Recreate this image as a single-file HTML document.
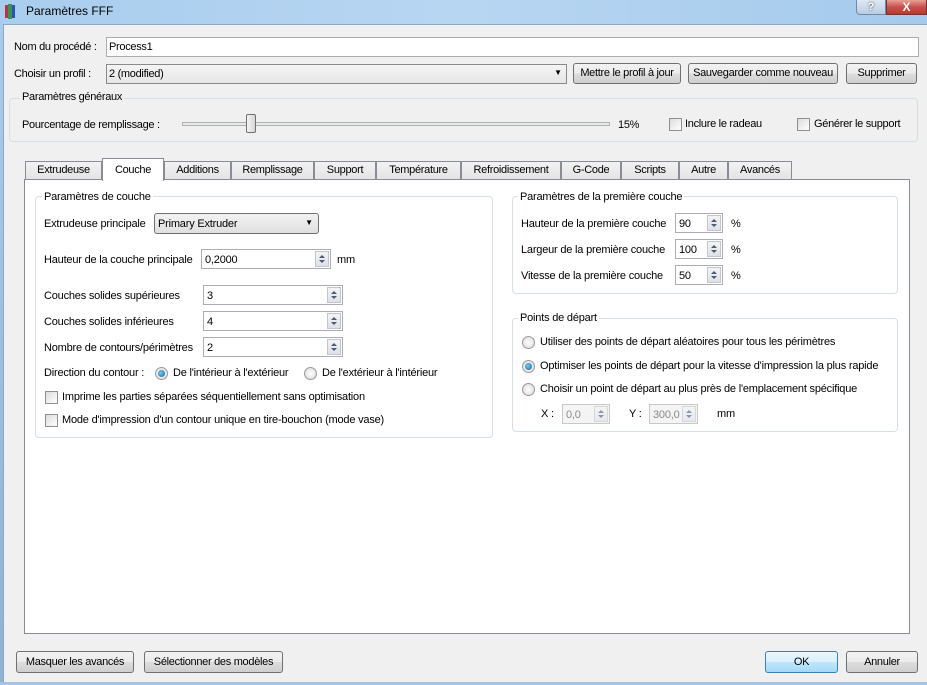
<!DOCTYPE html>
<html><head><meta charset="utf-8"><style>
*{box-sizing:border-box;margin:0;padding:0}
body{width:927px;height:685px;overflow:hidden;background:#f0f0f0;font-family:"Liberation Sans",sans-serif;font-size:11px;color:#000;position:relative}
.a{position:absolute;white-space:nowrap}
.c{font-size:11px;letter-spacing:-0.3px}
.inp{position:absolute;background:#fff;border:1px solid #abadb3}
.btn{position:absolute;border:1px solid #707070;border-radius:3px;background:linear-gradient(#f2f2f2,#ebebeb 50%,#dddddd 51%,#cfcfcf);text-align:center;font-size:11px;letter-spacing:-0.3px}
.grp{position:absolute;border:1px solid #d5dfe5;border-radius:4px}
.gt{position:absolute;background:#f0f0f0;padding:0 2px}
.gtw{position:absolute;background:#fff;padding:0 2px}
.spin{position:absolute;right:1px;top:1px;bottom:1px;width:14px;border:1px solid #c0c6cc;background:linear-gradient(#f4f4f4,#dde1e6)}
.spin:before{content:"";position:absolute;left:3px;top:3px;border:3px solid transparent;border-bottom:3px solid #4a5a78;border-top:0}
.spin:after{content:"";position:absolute;left:3px;bottom:3px;border:3px solid transparent;border-top:3px solid #4a5a78;border-bottom:0}
.cb{position:absolute;width:13px;height:13px;border:1px solid #8f8f8f;background:linear-gradient(135deg,#dcdcdc,#fff)}
.rb{position:absolute;width:13px;height:13px;border-radius:50%;border:1px solid #9a9a9a;background:radial-gradient(#fff,#d8d8d8)}
.rb.on:after{content:"";position:absolute;left:2px;top:2px;width:7px;height:7px;border-radius:50%;background:radial-gradient(circle at 40% 40%,#6ad0f6,#1b5a96)}
.tab{position:absolute;top:161px;height:19px;border:1px solid #898c95;border-bottom:none;background:linear-gradient(#f2f2f2,#e3e3e3);text-align:center;line-height:17px;font-size:11px;letter-spacing:-0.3px}
.t{font-size:11px;letter-spacing:-0.2px}
</style></head><body>
<div class="a" style="left:0;top:0;width:927px;height:25px;background:linear-gradient(90deg,#a9cdee,#b7d6f2 50%,#a5caec)"></div>
<div class="a" style="left:5px;top:5px;width:3px;height:13px;background:#c03040"></div>
<div class="a" style="left:8px;top:4px;width:4px;height:15px;background:#2c9a50"></div>
<div class="a" style="left:12px;top:5px;width:3px;height:13px;background:#3050c0"></div>
<div class="a" style="left:26px;top:4px;font-size:12px">Paramètres FFF</div>
<div class="a" style="left:856px;top:0;width:30px;height:15px;border:1px solid #6d8aa8;border-top:none;border-radius:0 0 0 4px;background:linear-gradient(#dfe9f5,#b8cde3);text-align:center;color:#fff;font-weight:bold;font-size:11px;line-height:14px;text-shadow:0 0 2px #333">?</div>
<div class="a" style="left:886px;top:0;width:41px;height:15px;border:1px solid #7a3030;border-top:none;background:linear-gradient(#e8a193,#c75050 50%,#b83a2a);text-align:center;color:#fff;font-weight:bold;font-size:12px;line-height:14px">X</div>
<div class="a" style="left:0;top:22px;width:4px;height:663px;background:linear-gradient(#aacbea,#8fb1d4)"></div>
<div class="a" style="left:3px;top:24px;width:924px;height:659px;border:1px solid #8da8c4;border-right:none;background:#f0f0f0"></div>
<div class="a" style="left:0;top:682px;width:927px;height:3px;background:#a3c4e4"></div>

<div class="a c" style="left:14px;top:41px">Nom du procédé :</div>
<div class="inp" style="left:106px;top:37px;width:813px;height:20px"><span class="a c" style="left:2px;top:3px">Process1</span></div>
<div class="a c" style="left:14px;top:68px">Choisir un profil :</div>
<div class="inp" style="left:106px;top:64px;width:461px;height:20px;border-color:#8a8a8a;background:linear-gradient(#f4f4f4,#e6e6e6)"><span class="a c" style="left:2px;top:3px">2 (modified)</span><span class="a" style="right:4px;top:3px;font-size:8px">▼</span></div>
<div class="btn" style="left:573px;top:63px;width:108px;height:21px;line-height:19px">Mettre le profil à jour</div>
<div class="btn" style="left:688px;top:63px;width:150px;height:21px;line-height:19px">Sauvegarder comme nouveau</div>
<div class="btn" style="left:846px;top:63px;width:71px;height:21px;line-height:19px">Supprimer</div>

<div class="grp" style="left:9px;top:98px;width:909px;height:44px"></div>
<div class="gt c" style="left:20px;top:91px">Paramètres généraux</div>
<div class="a c" style="left:22px;top:119px">Pourcentage de remplissage :</div>
<div class="a" style="left:182px;top:122px;width:428px;height:4px;border:1px solid #b0b0b0;background:#e7eaea"></div>
<div class="a" style="left:246px;top:114px;width:10px;height:19px;border:1px solid #707070;border-radius:2px;background:linear-gradient(90deg,#f4f4f4,#d6d6d6)"></div>
<div class="a c" style="left:618px;top:119px">15%</div>
<div class="cb" style="left:669px;top:118px"></div><div class="a c" style="left:685px;top:118px">Inclure le radeau</div>
<div class="cb" style="left:797px;top:118px"></div><div class="a c" style="left:814px;top:118px">Générer le support</div>

<div class="tab" style="left:25px;width:77px">Extrudeuse</div>
<div class="tab" style="left:164px;width:67px">Additions</div>
<div class="tab" style="left:231px;width:83px">Remplissage</div>
<div class="tab" style="left:314px;width:62px">Support</div>
<div class="tab" style="left:376px;width:85px">Température</div>
<div class="tab" style="left:461px;width:100px">Refroidissement</div>
<div class="tab" style="left:561px;width:60px">G-Code</div>
<div class="tab" style="left:621px;width:58px">Scripts</div>
<div class="tab" style="left:679px;width:49px">Autre</div>
<div class="tab" style="left:728px;width:64px">Avancés</div>
<div class="a" style="left:24px;top:179px;width:886px;height:455px;background:#fff;border:1px solid #898c95"></div>
<div class="tab" style="left:102px;top:158px;width:62px;height:23px;background:#fff;line-height:22px;border-bottom:none">Couche</div>

<div class="grp" style="left:35px;top:196px;width:458px;height:242px"></div>
<div class="gtw t" style="left:42px;top:191px">Paramètres de couche</div>
<div class="a t" style="left:44px;top:218px">Extrudeuse principale</div>
<div class="inp" style="left:154px;top:213px;width:165px;height:21px;border-color:#707070;border-radius:3px;background:linear-gradient(#f2f2f2,#e0e0e0)"><span class="a t" style="left:3px;top:4px">Primary Extruder</span><span class="a" style="right:5px;top:4px;font-size:8px">▼</span></div>
<div class="a t" style="left:44px;top:254px">Hauteur de la couche principale</div>
<div class="inp" style="left:201px;top:249px;width:130px;height:20px"><span class="a t" style="left:3px;top:4px">0,2000</span><div class="spin"></div></div>
<div class="a t" style="left:337px;top:254px">mm</div>
<div class="a t" style="left:44px;top:290px">Couches solides supérieures</div>
<div class="inp" style="left:203px;top:285px;width:140px;height:20px"><span class="a t" style="left:3px;top:4px">3</span><div class="spin"></div></div>
<div class="a t" style="left:44px;top:316px">Couches solides inférieures</div>
<div class="inp" style="left:203px;top:311px;width:140px;height:20px"><span class="a t" style="left:3px;top:4px">4</span><div class="spin"></div></div>
<div class="a t" style="left:44px;top:342px">Nombre de contours/périmètres</div>
<div class="inp" style="left:203px;top:337px;width:140px;height:20px"><span class="a t" style="left:3px;top:4px">2</span><div class="spin"></div></div>
<div class="a t" style="left:44px;top:367px">Direction du contour :</div>
<div class="rb on" style="left:155px;top:367px"></div><div class="a t" style="left:173px;top:367px">De l'intérieur à l'extérieur</div>
<div class="rb" style="left:304px;top:367px"></div><div class="a t" style="left:322px;top:367px">De l'extérieur à l'intérieur</div>
<div class="cb" style="left:45px;top:391px"></div><div class="a t" style="left:62px;top:391px">Imprime les parties séparées séquentiellement sans optimisation</div>
<div class="cb" style="left:45px;top:414px"></div><div class="a t" style="left:62px;top:414px">Mode d'impression d'un contour unique en tire-bouchon (mode vase)</div>

<div class="grp" style="left:512px;top:196px;width:386px;height:98px"></div>
<div class="gtw t" style="left:518px;top:191px">Paramètres de la première couche</div>
<div class="a t" style="left:521px;top:218px">Hauteur de la première couche</div>
<div class="inp" style="left:675px;top:213px;width:48px;height:20px"><span class="a t" style="left:3px;top:4px">90</span><div class="spin"></div></div>
<div class="a t" style="left:731px;top:218px">%</div>
<div class="a t" style="left:521px;top:244px">Largeur de la première couche</div>
<div class="inp" style="left:675px;top:239px;width:48px;height:20px"><span class="a t" style="left:3px;top:4px">100</span><div class="spin"></div></div>
<div class="a t" style="left:731px;top:244px">%</div>
<div class="a t" style="left:521px;top:270px">Vitesse de la première couche</div>
<div class="inp" style="left:675px;top:265px;width:48px;height:20px"><span class="a t" style="left:3px;top:4px">50</span><div class="spin"></div></div>
<div class="a t" style="left:731px;top:270px">%</div>

<div class="grp" style="left:512px;top:318px;width:386px;height:114px"></div>
<div class="gtw t" style="left:518px;top:312px">Points de départ</div>
<div class="rb" style="left:522px;top:336px"></div><div class="a t" style="left:540px;top:336px">Utiliser des points de départ aléatoires pour tous les périmètres</div>
<div class="rb on" style="left:522px;top:360px"></div><div class="a t" style="left:540px;top:360px">Optimiser les points de départ pour la vitesse d'impression la plus rapide</div>
<div class="rb" style="left:522px;top:383px"></div><div class="a t" style="left:540px;top:383px">Choisir un point de départ au plus près de l'emplacement spécifique</div>
<div class="a t" style="left:541px;top:408px">X :</div>
<div class="inp" style="left:562px;top:404px;width:48px;height:20px;background:#f4f4f4;border-color:#c8c8c8;color:#8a8a8a"><span class="a t" style="left:3px;top:4px">0,0</span><div class="spin" style="opacity:.6"></div></div>
<div class="a t" style="left:629px;top:408px">Y :</div>
<div class="inp" style="left:649px;top:404px;width:49px;height:20px;background:#f4f4f4;border-color:#c8c8c8;color:#8a8a8a"><span class="a t" style="left:3px;top:4px">300,0</span><div class="spin" style="opacity:.6"></div></div>
<div class="a t" style="left:717px;top:408px">mm</div>

<div class="btn" style="left:16px;top:651px;width:118px;height:22px;line-height:20px">Masquer les avancés</div>
<div class="btn" style="left:144px;top:651px;width:139px;height:22px;line-height:20px">Sélectionner des modèles</div>
<div class="btn" style="left:765px;top:651px;width:73px;height:22px;line-height:20px;border-color:#3c7fb1;background:linear-gradient(#eaf6fd,#d9f0fc 50%,#bee6fd 51%,#a7d9f5)">OK</div>
<div class="btn" style="left:846px;top:651px;width:72px;height:22px;line-height:20px">Annuler</div>
</body></html>
